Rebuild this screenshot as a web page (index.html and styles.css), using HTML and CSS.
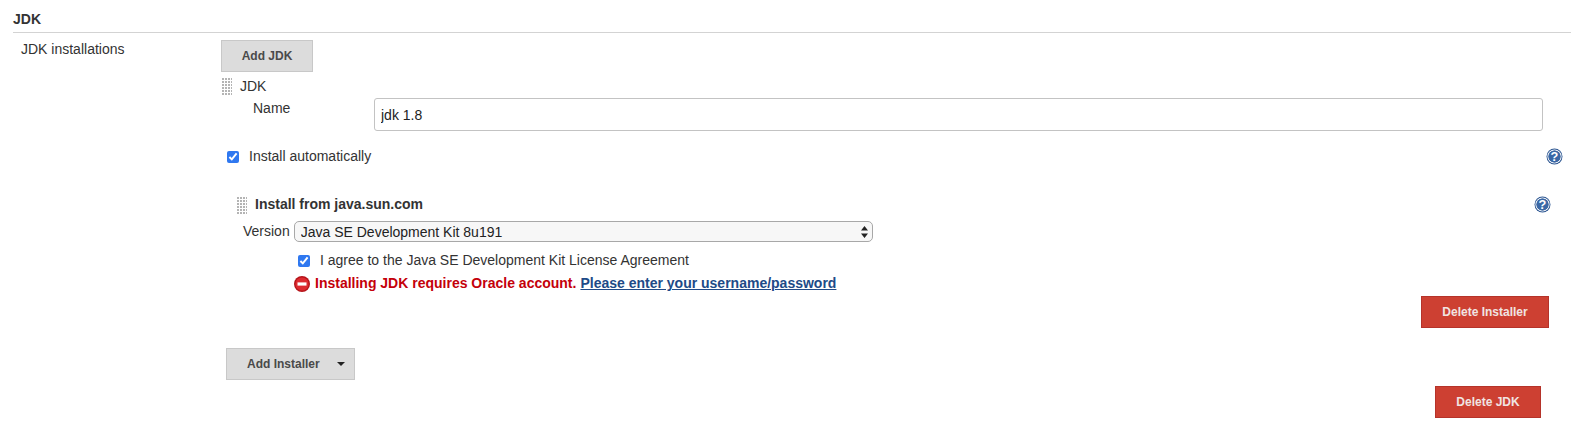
FILE: index.html
```html
<!DOCTYPE html>
<html lang="en">
<head>
    <meta charset="UTF-8">
    <title>JDK</title>
    <link rel="stylesheet" href="styles.css">
</head>
<body>
    <div class="section-header">JDK</div>
    <div class="setting">
        <div class="setting-name">JDK installations</div>
        <div class="setting-main">
            <button class="btn btn-add" type="button">Add JDK</button>
            <div class="chunk-title">
                <span class="handle"></span>
                <span>JDK</span>
            </div>
            <div class="name-row">
                <label class="name-label" for="jdk-name">Name</label>
                <input class="text-input" id="jdk-name" type="text" value="jdk 1.8">
            </div>
            <div class="auto-row">
                <label class="check-label">
                    <input class="check" type="checkbox" checked>
                    <span>Install automatically</span>
                </label>
                <svg class="help" viewBox="0 0 16 16"><circle cx="8" cy="8" r="7.5" fill="#2a5490"/><circle cx="8" cy="8" r="6.2" fill="none" stroke="#fff" stroke-width="1"/><circle cx="8" cy="8" r="5.6" fill="#3b68a6"/><text class="help-mark" x="8" y="12">?</text></svg>
            </div>
            <div class="installer">
                <div class="installer-head">
                    <span class="handle"></span>
                    <b class="installer-title">Install from java.sun.com</b>
                    <svg class="help" viewBox="0 0 16 16"><circle cx="8" cy="8" r="7.5" fill="#2a5490"/><circle cx="8" cy="8" r="6.2" fill="none" stroke="#fff" stroke-width="1"/><circle cx="8" cy="8" r="5.6" fill="#3b68a6"/><text class="help-mark" x="8" y="12">?</text></svg>
                </div>
                <div class="version-row">
                    <label class="version-label" for="version">Version</label>
                    <div class="select-wrap">
                        <select class="select" id="version">
                            <option>Java SE Development Kit 8u191</option>
                        </select>
                        <svg class="select-arrows" viewBox="0 0 7 12"><path d="M3.5 0 7 4.6H0zM3.5 12 0 7.4h7z" fill="#222"/></svg>
                    </div>
                </div>
                <label class="check-label agree-row">
                    <input class="check" type="checkbox" checked>
                    <span>I agree to the Java SE Development Kit License Agreement</span>
                </label>
                <div class="error-row">
                    <svg class="error-icon" viewBox="0 0 16 16"><circle cx="8" cy="8" r="8" fill="#b5141a"/><circle cx="8" cy="8" r="6.6" fill="#dd2a2f"/><rect x="3.5" y="6.4" width="9" height="3.2" fill="#fff"/></svg>
                    <b class="error-text">Installing JDK requires Oracle account.</b>
                    <a class="error-link" href="#">Please enter your username/password</a>
                </div>
                <div class="right-row">
                    <button class="btn btn-delete btn-delete-installer" type="button">Delete Installer</button>
                </div>
            </div>
            <button class="btn btn-installer" type="button">Add Installer<span class="caret"></span></button>
            <div class="right-row right-row-jdk">
                <button class="btn btn-delete btn-delete-jdk" type="button">Delete JDK</button>
            </div>
        </div>
    </div>
</body>
</html>
```

FILE: styles.css
```css
body {
    margin: 0;
    height: 429px;
    overflow: hidden;
    background-color: #fff;
    color: #333;
    font-family: "Liberation Sans", Arial, sans-serif;
    font-size: 14px;
    line-height: 17px;
}
.section-header {
    margin: 0 7px 0 13px;
    padding-top: 11px;
    height: 21px;
    border-bottom: 1px solid #d3d3d3;
    font-weight: bold;
}
.setting {
    display: flex;
    padding: 7px 15px 0 21px;
}
.setting-name {
    width: 200px;
    flex: none;
    padding-top: 1px;
}
.setting-main {
    flex: 1;
    min-width: 0;
}
.btn {
    display: block;
    height: 32px;
    padding: 0;
    border: 1px solid #c8c8c8;
    border-radius: 0;
    background-color: #dcdcdc;
    color: #4a4a4a;
    font-family: inherit;
    font-size: 12px;
    font-weight: bold;
}
.btn-add {
    width: 92px;
}
.chunk-title {
    display: flex;
    align-items: center;
    gap: 8px;
    height: 18px;
    margin-top: 5px;
}
.handle {
    display: block;
    flex: none;
    width: 11px;
    height: 18px;
    background-image: linear-gradient(#fff 1px, transparent 1px), linear-gradient(90deg, #fff 1px, #b4b4b4 1px);
    background-size: 3px 3px;
}
.name-row {
    display: flex;
    margin-top: 4px;
}
.name-label {
    width: 153px;
    padding: 1px 0 0 32px;
    box-sizing: border-box;
    flex: none;
}
.text-input {
    flex: none;
    width: 1169px;
    height: 33px;
    margin-top: -1px;
    box-sizing: border-box;
    padding: 0 6px;
    border: 1px solid #c3c3c3;
    border-radius: 3px;
    color: #222;
    font-family: inherit;
    font-size: 14px;
}
.auto-row {
    display: flex;
    justify-content: space-between;
    align-items: center;
    height: 17px;
    margin-top: 17px;
    padding-left: 6px;
}
.check-label {
    display: flex;
    align-items: center;
}
.check {
    width: 12px;
    height: 12px;
    margin: 0 10px 0 0;
    accent-color: #2f78f0;
}
.help {
    flex: none;
    width: 17px;
    height: 17px;
}
.help-mark {
    fill: #fff;
    font-family: "Liberation Sans", Arial, sans-serif;
    font-size: 12px;
    font-weight: bold;
    text-anchor: middle;
}
.installer {
    margin: 31px 12px 0 15px;
}
.installer-head {
    display: flex;
    align-items: center;
    gap: 8px;
    height: 17px;
}
.installer-title {
    flex: 1;
}
.version-row {
    display: flex;
    align-items: center;
    gap: 4px;
    margin-top: 8px;
    padding-left: 7px;
}
.select-wrap {
    position: relative;
    width: 579px;
    height: 21px;
}
.select {
    display: block;
    width: 100%;
    height: 100%;
    box-sizing: border-box;
    padding: 0 6px;
    border: 1px solid #a8a8a8;
    border-radius: 5px;
    background-color: #f7f7f7;
    color: #222;
    font-family: inherit;
    font-size: 14px;
    appearance: none;
}
.select-arrows {
    position: absolute;
    top: 5px;
    right: 5px;
    width: 7px;
    height: 12px;
}
.agree-row {
    margin: 10px 0 0 62px;
}
.error-row {
    display: flex;
    align-items: center;
    height: 17px;
    margin: 6px 0 0 58px;
}
.error-icon {
    flex: none;
    width: 16px;
    height: 16px;
    margin-right: 5px;
}
.error-text {
    margin-right: 4px;
    color: #c4000a;
}
.error-link {
    color: #204a87;
    font-weight: bold;
}
.right-row {
    display: flex;
    justify-content: flex-end;
    margin: 4px 2px 0 0;
}
.btn-delete {
    border-color: #b5332a;
    background-color: #cd4032;
    color: #f0e4e2;
}
.btn-delete-installer {
    width: 128px;
}
.btn-delete-jdk {
    width: 106px;
}
.btn-installer {
    display: flex;
    align-items: center;
    width: 129px;
    margin: 20px 0 0 5px;
    padding-left: 20px;
}
.caret {
    margin-left: 17px;
    border-top: 4px solid #222;
    border-left: 4px solid transparent;
    border-right: 4px solid transparent;
}
.right-row-jdk {
    margin: 6px 22px 0 0;
}
```
